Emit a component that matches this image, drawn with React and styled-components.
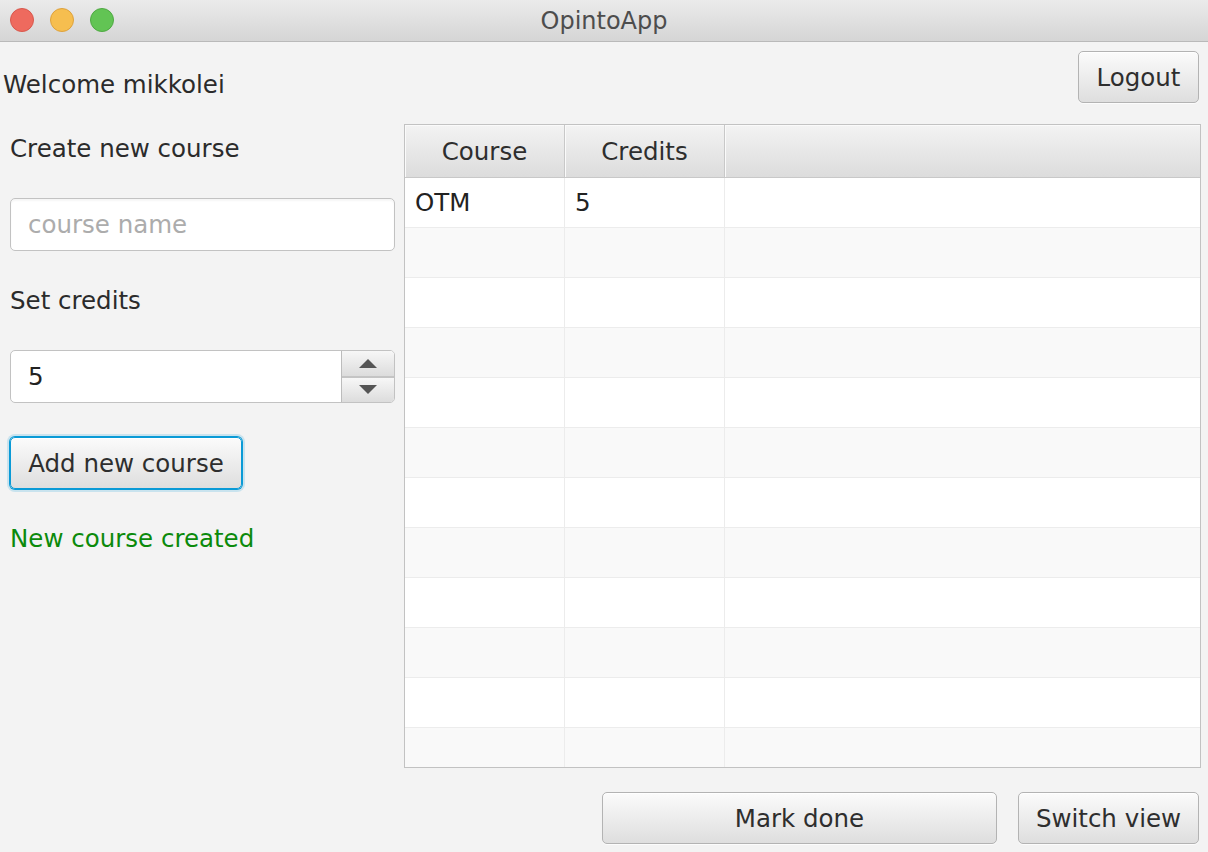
import React from "react";
import styled, { createGlobalStyle } from "styled-components";

const GlobalStyle = createGlobalStyle`
  html, body {
    margin: 0;
    padding: 0;
    background: #f3f3f3;
  }
  body {
    font-family: "DejaVu Sans", "Liberation Sans", sans-serif;
    color: #333;
  }
`;

const Window = styled.div`
  width: 1208px;
  height: 852px;
  display: flex;
  flex-direction: column;
  background: #f3f3f3;
  overflow: hidden;
`;

const TitleBar = styled.div`
  height: 42px;
  flex: none;
  display: flex;
  align-items: center;
  justify-content: center;
  position: relative;
  background: linear-gradient(#ebebeb, #d5d5d5);
  border-bottom: 1px solid #b9b9b9;
  box-sizing: border-box;
  font-size: 24px;
  color: #4d4d4d;
`;

const Lights = styled.div`
  position: absolute;
  left: 10px;
  top: 8px;
  display: flex;
  gap: 16px;
`;

const Light = styled.span`
  width: 24px;
  height: 24px;
  border-radius: 50%;
  box-sizing: border-box;
  background: ${(p) => p.$color};
  border: 1px solid ${(p) => p.$edge};
`;

const Content = styled.div`
  flex: 1;
  display: flex;
  flex-direction: column;
  padding: 9px 0 9px 0;
`;

const TopRow = styled.div`
  height: 52px;
  display: flex;
  justify-content: space-between;
  align-items: flex-start;
  padding: 0 9px 0 3px;
  margin-bottom: 21px;
`;

const Welcome = styled.div`
  font-size: 24.5px;
  line-height: 30px;
  margin-top: 19px;
  color: #2b2b2b;
`;

const Button = styled.button`
  font-family: inherit;
  font-size: 24.5px;
  color: #2e2e2e;
  height: 52px;
  width: ${(p) => (p.$w ? `${p.$w}px` : "auto")};
  padding: 0 10px;
  border-radius: 5px;
  border: 1px solid ${(p) => (p.$focused ? "#0a9ad6" : "#b3b3b3")};
  background: linear-gradient(#fbfbfb, #dedede);
  box-shadow: ${(p) =>
    p.$focused
      ? "0 0 0 1px #0a9ad6, 0 0 0 3px rgba(10,154,214,0.18), inset 0 1px 0 #fff"
      : "inset 0 1px 0 #fff, 0 1px 0 rgba(255,255,255,0.7)"};
  box-sizing: border-box;
`;

const Main = styled.div`
  height: 644px;
  display: flex;
`;

const Side = styled.div`
  width: 404px;
  box-sizing: border-box;
  padding: 10px 9px 0 10px;
  display: flex;
  flex-direction: column;
  flex: none;
`;

const Label = styled.div`
  font-size: 24.5px;
  line-height: 30px;
  margin-top: ${(p) => p.$mt || 0}px;
  color: ${(p) => p.$color || "#2b2b2b"};
`;

const Field = styled.div`
  height: 53px;
  margin-top: 34px;
  box-sizing: border-box;
  border: 1px solid #c2c2c2;
  border-radius: 5px;
  background: #fff;
  box-shadow: inset 0 2px 2px rgba(0, 0, 0, 0.04);
  display: flex;
  align-items: center;
  padding-left: 17px;
  font-size: 24.5px;
  color: ${(p) => (p.$placeholder ? "#acacac" : "#222")};
  overflow: hidden;
`;

const Spinner = styled.div`
  height: 53px;
  margin-top: 34px;
  display: flex;
  border: 1px solid #c2c2c2;
  border-radius: 5px;
  background: #fff;
  box-sizing: border-box;
  overflow: hidden;
`;

const SpinValue = styled.div`
  flex: 1;
  display: flex;
  align-items: center;
  padding-left: 17px;
  font-size: 24.5px;
  color: #222;
`;

const Arrows = styled.div`
  width: 52px;
  display: flex;
  flex-direction: column;
  border-left: 1px solid #bcbcbc;
`;

const Arrow = styled.div`
  flex: 1;
  display: flex;
  align-items: center;
  justify-content: center;
  background: linear-gradient(#f7f7f7, #dcdcdc);
  border-top: ${(p) => (p.$down ? "2px solid #c4c4c4" : "none")};
  &::after {
    content: "";
    width: 0;
    height: 0;
    border-left: 9px solid transparent;
    border-right: 9px solid transparent;
    ${(p) =>
      p.$down
        ? "border-top: 9px solid #555;"
        : "border-bottom: 9px solid #555;"}
  }
`;

const AddRow = styled.div`
  display: flex;
  margin-top: 34px;
`;

const Table = styled.div`
  flex: 1;
  margin-right: 7px;
  border: 1px solid #c2c2c2;
  background: #fff;
  overflow: hidden;
  display: flex;
  flex-direction: column;
`;

const Cols = "160px 160px 1fr";

const HeaderRow = styled.div`
  height: 53px;
  flex: none;
  display: grid;
  grid-template-columns: ${Cols};
  background: linear-gradient(#f3f3f3, #dcdcdc);
  border-bottom: 1px solid #c8c8c8;
  box-sizing: border-box;
`;

const HeaderCell = styled.div`
  display: flex;
  align-items: center;
  justify-content: center;
  font-size: 24.5px;
  color: #2e2e2e;
  border-right: 1px solid #c8c8c8;
  box-shadow: inset 1px 1px 0 #fafafa;
  &:last-child {
    border-right: none;
  }
`;

const Row = styled.div`
  height: 50px;
  flex: none;
  display: grid;
  grid-template-columns: ${Cols};
  background: ${(p) => (p.$odd ? "#f9f9f9" : "#fff")};
  border-bottom: 1px solid #ececec;
  box-sizing: border-box;
`;

const Cell = styled.div`
  display: flex;
  align-items: center;
  padding-left: 10px;
  font-size: 24.5px;
  color: #222;
  border-right: 1px solid #ececec;
  &:last-child {
    border-right: none;
  }
`;

const BottomRow = styled.div`
  margin-top: 24px;
  display: flex;
  justify-content: flex-end;
  gap: 21px;
  padding-right: 9px;
`;

const rows = [["OTM", "5"]];
for (let i = 0; i < 11; i++) rows.push(["", ""]);

export default function App() {
  return (
    <>
      <GlobalStyle />
      <Window>
        <TitleBar>
          <Lights>
            <Light $color="#ee6a5e" $edge="#d8584d" />
            <Light $color="#f6be4f" $edge="#dea23c" />
            <Light $color="#62c454" $edge="#4fa943" />
          </Lights>
          OpintoApp
        </TitleBar>
        <Content>
          <TopRow>
            <Welcome>Welcome mikkolei</Welcome>
            <Button $w={121}>Logout</Button>
          </TopRow>
          <Main>
            <Side>
              <Label>Create new course</Label>
              <Field $placeholder>course name</Field>
              <Label $mt={35}>Set credits</Label>
              <Spinner>
                <SpinValue>5</SpinValue>
                <Arrows>
                  <Arrow />
                  <Arrow $down />
                </Arrows>
              </Spinner>
              <AddRow>
                <Button $w={232} $focused>
                  Add new course
                </Button>
              </AddRow>
              <Label $mt={35} $color="#0b8a0b">
                New course created
              </Label>
            </Side>
            <Table>
              <HeaderRow>
                <HeaderCell>Course</HeaderCell>
                <HeaderCell>Credits</HeaderCell>
                <HeaderCell />
              </HeaderRow>
              {rows.map((r, i) => (
                <Row key={i} $odd={i % 2 === 1}>
                  <Cell>{r[0]}</Cell>
                  <Cell>{r[1]}</Cell>
                  <Cell />
                </Row>
              ))}
            </Table>
          </Main>
          <BottomRow>
            <Button $w={395}>Mark done</Button>
            <Button $w={181}>Switch view</Button>
          </BottomRow>
        </Content>
      </Window>
    </>
  );
}
